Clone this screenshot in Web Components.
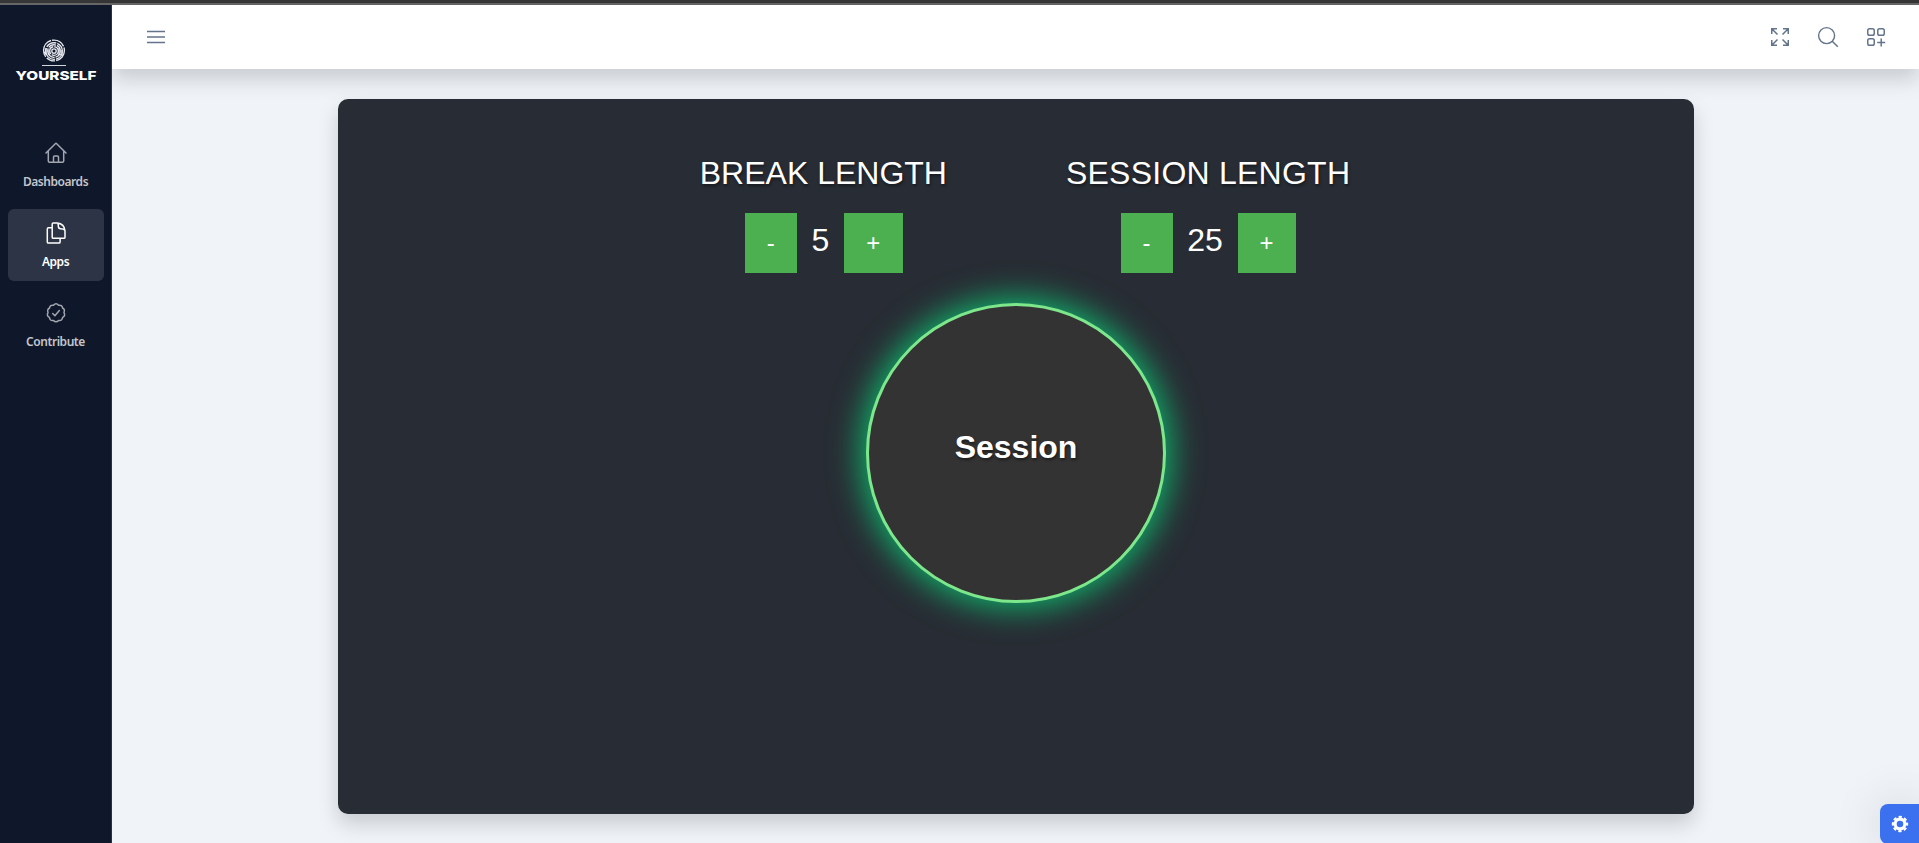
<!DOCTYPE html>
<html lang="en">
<head>
<meta charset="utf-8">
<title>Session timer</title>
<style>
html,body{margin:0;height:100%}
body{background:#f0f4f9;overflow:hidden;font-family:"Liberation Sans",Arial,sans-serif}
</style>
</head>
<body>
<app-shell></app-shell>
<script>
function define(name, html) {
  const t = document.createElement('template');
  t.innerHTML = html;
  customElements.define(name, class extends HTMLElement {
    constructor() {
      super();
      this.attachShadow({mode: 'open'}).append(t.content.cloneNode(true));
    }
  });
}

define('brand-logo', `
<style>:host{display:block;width:112px;height:50px}svg{display:block}</style>
<svg width="112" height="50" viewBox="0 35 112 50" fill="none">
  <g stroke="#e8eaf0" stroke-width="1.35">
    <circle cx="54" cy="50.5" r="10.4" stroke-dasharray="14 1.2 9 1.5 20 1"/>
    <circle cx="54" cy="51" r="8.3" stroke-dasharray="11 1 17 1.2"/>
    <circle cx="54" cy="51" r="6.3" stroke-dasharray="8 1 13 1"/>
    <circle cx="54" cy="51" r="4.3" stroke-dasharray="9 1"/>
    <circle cx="54" cy="51" r="2.2"/>
    <path d="M46 48v7M49 50v5M59 48v7M62 50v5M44 52l3 3M60 54l3 2"/>
  </g>
  <path d="M42 65.5h24" stroke="#d3d6dd" stroke-width="1"/>
  <text x="15.5" y="79.6" fill="#fff" font-family="Inter,sans-serif" font-weight="800" font-size="12.4" textLength="81" lengthAdjust="spacingAndGlyphs">YOURSELF</text>
</svg>`);

define('nav-item', `
<style>
:host{display:flex;flex-direction:column;align-items:center;box-sizing:border-box;width:96px;height:72px;padding-top:12px;border-radius:6px;color:#c3c6cc;font:600 12px/18px "Noto Sans","Open Sans",sans-serif;letter-spacing:-.45px}
:host([active]){background:#2d3446;color:#fff}
.icon{height:24px;margin-bottom:8px;opacity:.82}
:host([active]) .icon{opacity:1}
</style>
<div class="icon"><slot name="icon"></slot></div><span><slot></slot></span>`);

define('side-bar', `
<style>
:host{display:flex;flex-direction:column;align-items:center;box-sizing:border-box;width:112px;background:#0f172a;border-right:1px solid #293144;padding-top:30px}
nav{display:flex;flex-direction:column;gap:8px;margin-top:44px}
svg{display:block;fill:none;stroke:currentColor;stroke-width:1.5;stroke-linecap:round;stroke-linejoin:round}
</style>
<brand-logo></brand-logo>
<nav>
<nav-item><svg slot="icon" width="24" height="24" viewBox="0 0 24 24"><path d="M2 12 11.3 2.7q.7-.7 1.4 0L22 12M4.3 10v10q0 1.2 1.2 1.2h13q1.2 0 1.2-1.2V10M9.5 21v-5q0-1 1-1h3q1 0 1 1v5"/></svg>Dashboards</nav-item>
<nav-item active><svg slot="icon" width="24" height="24" viewBox="0 0 24 24"><path d="M8.2 6.8H4.4q-1.1 0-1.1 1.1v13q0 1.1 1.1 1.1H15q1.1 0 1.1-1.1v-3.6M8.2 3q0-1.1 1.1-1.1h3.8q7.4.7 7.9 8v6.3q0 1.1-1.1 1.1H9.3q-1.1 0-1.1-1.1zM13.7 2.2q.7 1.2.7 3.4 0 2.2 2.2 2.2 3.2 0 4.3 1.4"/></svg>Apps</nav-item>
<nav-item><svg slot="icon" width="24" height="24" viewBox="0 0 24 24"><path d="M12 2.8q1.4 0 2.6 1.4 1.9-.2 2.8.5.9.7 1.2 2.3 1.4.8 1.7 1.8.3 1.1-.3 2.8.9 1.7.5 2.9-.3 1.1-1.8 1.9-.4 1.9-1.3 2.6-.9.7-2.8.4-1.3 1.4-2.6 1.4-1.3 0-2.5-1.4-1.9.3-2.9-.4-.9-.7-1.2-2.6-1.6-.8-1.9-1.9-.4-1.2.5-2.9-.6-1.7-.2-2.8.3-1 1.7-1.8.3-1.6 1.2-2.3.9-.7 2.8-.5Q10.7 2.8 12 2.8zM8.7 12.5l2.2 2.2 4.4-5.2"/></svg>Contribute</nav-item>
</nav>`);

define('top-bar', `
<style>
:host{display:flex;box-sizing:border-box;align-items:center;height:64px;padding:0 31px 0 32px;background:#fff;color:#64748b;box-shadow:0 10px 20px rgba(0,0,0,.17);position:relative}
.tools{display:flex;gap:24px;margin-left:auto}
svg{display:block;fill:none;stroke:currentColor;stroke-width:1.5}
</style>
<svg width="24" height="24" viewBox="0 0 24 24"><path d="M3 6.5h18M3 12h18M3 17.5h18"/></svg>
<div class="tools">
<svg width="24" height="24" viewBox="0 0 24 24"><path d="M3.75 9V3.75H9M3.75 3.75 9.5 9.5M15 3.75h5.25V9M20.25 3.75 14.5 9.5M3.75 15v5.25H9M3.75 20.25 9.5 14.5M15 20.25h5.25V15M20.25 20.25 14.5 14.5"/></svg>
<svg width="24" height="24" viewBox="0 0 24 24"><circle cx="10.6" cy="10.6" r="8" stroke-width="1.4"/><path d="m16.2 16.2 5.6 5.6"/></svg>
<svg width="24" height="24" viewBox="0 0 24 24"><rect x="3.75" y="3.75" width="6.5" height="6.5" rx="1.8"/><rect x="13.75" y="3.75" width="6.5" height="6.5" rx="1.8"/><rect x="3.75" y="13.75" width="6.5" height="6.5" rx="1.8"/><path d="M17.2 13.5v8M13.2 17.5h8"/></svg>
</div>`);

define('length-control', `
<style>
:host{display:flex;flex-direction:column;align-items:center;color:#fff}
h2{margin:0;font-size:32px;line-height:38px;font-weight:400;letter-spacing:var(--track,0);white-space:nowrap;text-shadow:1px 2px 3px rgba(0,0,0,.45)}
.row{display:flex;align-items:flex-start;margin-top:21px;padding-left:var(--shift,0)}
button{display:block;margin:0;border:0;padding:0;width:52px;height:60px;background:#4caf50;color:#fff;font:24px/60px "Liberation Sans",Arial,sans-serif}
.plus{width:var(--plus,59px)}
.value{width:var(--value,46px);text-align:center;font-size:32px;line-height:54px}
</style>
<h2><slot name="title"></slot></h2>
<div class="row"><button>-</button><span class="value"><slot></slot></span><button class="plus">+</button></div>`);

define('timer-dial', `
<style>
:host{display:flex;box-sizing:border-box;justify-content:center;width:300px;height:300px;border:3px solid #7ee78c;border-radius:50%;background:#333;box-shadow:0 0 32px 5px #0fb56c;color:#fff}
b{font-size:32px;line-height:38px;margin:122px 0 0 1px;text-shadow:1px 2px 3px rgba(0,0,0,.45)}
</style><b><slot></slot></b>`);

define('timer-card', `
<style>
:host{display:flex;flex-direction:column;align-items:center;box-sizing:border-box;width:1356px;height:715px;padding-top:55px;border-radius:10px;background:#282c34;box-shadow:0 10px 20px rgba(0,0,0,.17)}
.lengths{display:flex;gap:119px;padding-left:19px}
.first{--value:47px;--plus:59px;--shift:1px}
.second{--value:65px;--plus:58px;--track:.24px}
timer-dial{margin-top:30px}
</style>
<div class="lengths">
<length-control class="first"><span slot="title">BREAK LENGTH</span>5</length-control>
<length-control class="second"><span slot="title">SESSION LENGTH</span>25</length-control>
</div>
<timer-dial>Session</timer-dial>`);

define('settings-button', `
<style>
:host{position:absolute;right:0;top:804px;box-sizing:border-box;width:39px;height:40px;padding:10px 0 0 10px;background:#3b71ee;border-radius:8px 0 0 8px;box-shadow:0 0 48px rgba(0,0,0,.15)}
svg{display:block}
</style>
<svg width="20" height="20" viewBox="0 0 20 20"><g fill="none" stroke="#fff"><circle cx="10" cy="10" r="4.9" stroke-width="3.2"/><circle cx="10" cy="10" r="7.1" stroke-width="2.2" stroke-dasharray="3.2 2.376" stroke-dashoffset="1.6"/></g></svg>`);

define('app-shell', `
<style>
:host{display:flex;flex-direction:column;height:843px;position:relative;overflow:hidden}
.strip{height:3px;flex:none;background:#363636;border-bottom:2px solid #666}
.body{display:flex;flex:1;min-height:0}
side-bar{flex:none;position:relative;z-index:2}
main{flex:1;display:flex;flex-direction:column}
timer-card{margin:30px auto 0}
</style>
<div class="strip"></div>
<div class="body"><side-bar></side-bar><main><top-bar></top-bar><timer-card></timer-card></main></div>
<settings-button></settings-button>`);
</script>
</body>
</html>
